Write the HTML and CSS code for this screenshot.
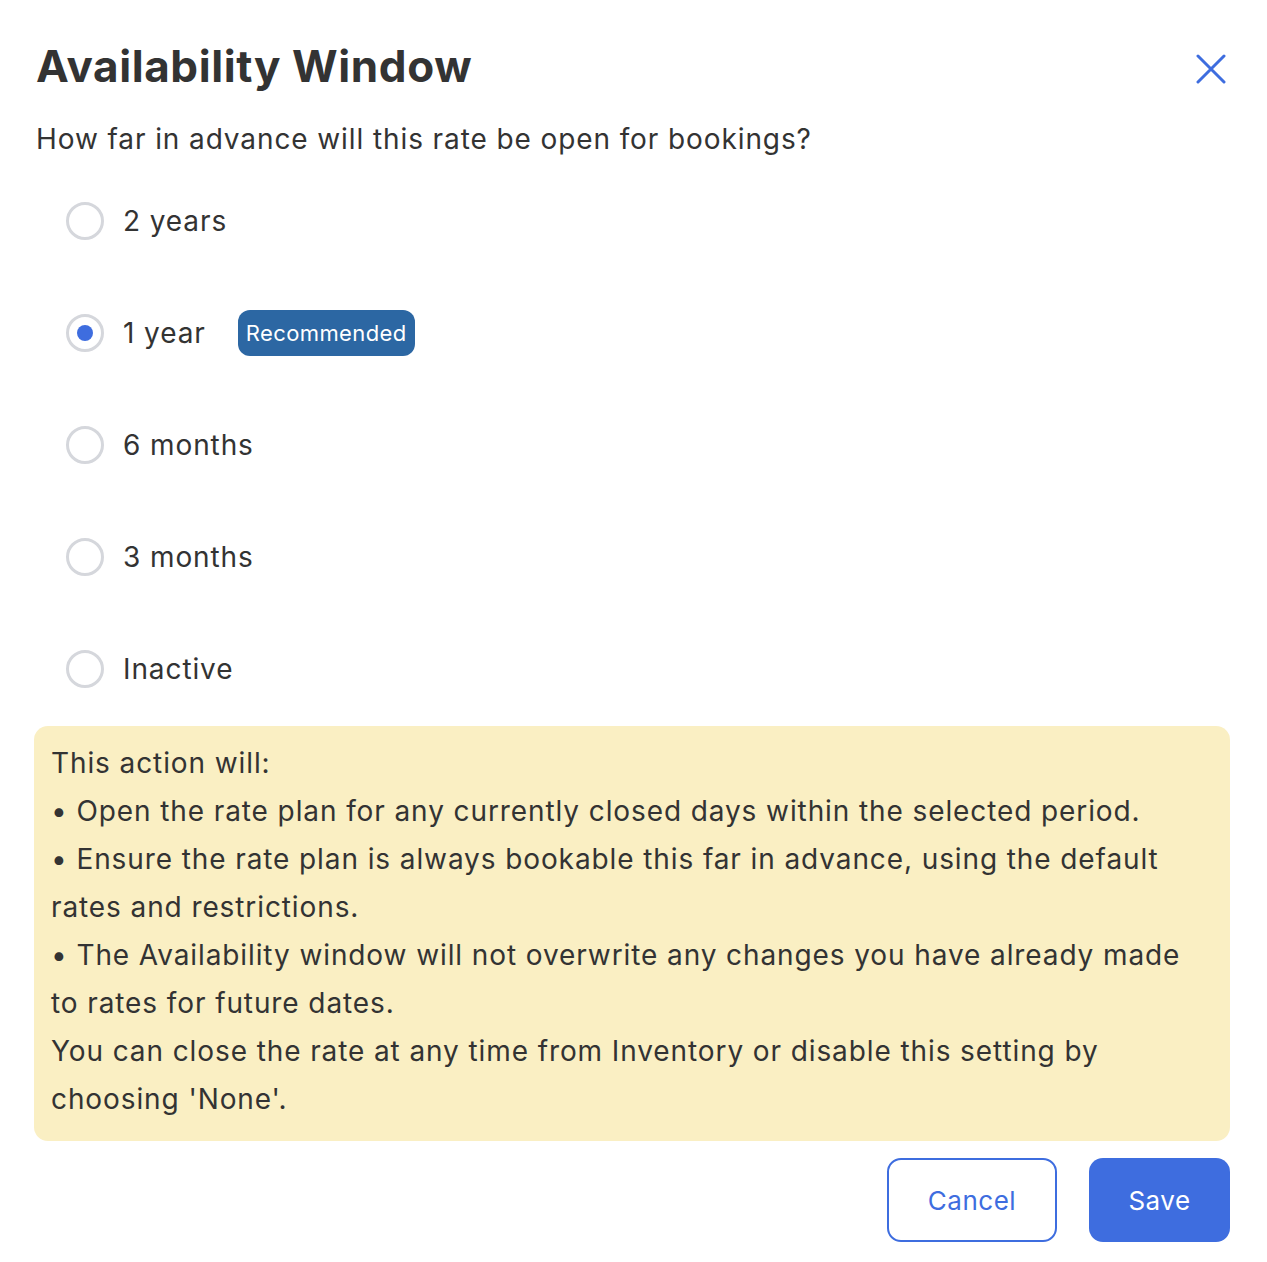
FILE: index.html
```html
<!DOCTYPE html>
<html lang="en">
<head>
    <meta charset="UTF-8">
    <meta name="viewport" content="width=device-width, initial-scale=1.0">
    <title>Availability Window</title>
    <link rel="stylesheet" href="styles.css">
</head>
<body>
    <div class="dialog">
        <div class="dialog-header">
            <h1 class="title">Availability Window</h1>
            <button class="close" aria-label="Close">
                <svg width="30" height="30" viewBox="0 0 30 30"><path d="M2 2 L28 28 M28 2 L2 28" stroke="#3e6ddf" stroke-width="3" stroke-linecap="round" fill="none"/></svg>
            </button>
        </div>
        <p class="question">How far in advance will this rate be open for bookings?</p>
        <div class="options">
            <label class="option"><input type="radio" name="window"><span class="radio"></span><span>2 years</span></label>
            <label class="option"><input type="radio" name="window" checked><span class="radio"></span><span>1 year</span><span class="badge">Recommended</span></label>
            <label class="option"><input type="radio" name="window"><span class="radio"></span><span>6 months</span></label>
            <label class="option"><input type="radio" name="window"><span class="radio"></span><span>3 months</span></label>
            <label class="option"><input type="radio" name="window"><span class="radio"></span><span>Inactive</span></label>
        </div>
        <div class="notice">
            <div>This action will:</div>
            <div>• Open the rate plan for any currently closed days within the selected period.</div>
            <div>• Ensure the rate plan is always bookable this far in advance, using the default rates and restrictions.</div>
            <div>• The Availability window will not overwrite any changes you have already made to rates for future dates.</div>
            <div>You can close the rate at any time from Inventory or disable this setting by choosing 'None'.</div>
        </div>
        <div class="actions">
            <button class="btn btn-cancel">Cancel</button>
            <button class="btn btn-save">Save</button>
        </div>
    </div>
</body>
</html>
```

FILE: styles.css
```css
body {
    font-family: Inter, sans-serif;
    color: #333333;
    margin: 0;
    background: #ffffff;
}
.dialog {
    padding: 36px 37px 20px 34px;
}
.dialog-header {
    display: flex;
    justify-content: space-between;
    align-items: center;
    padding-left: 2px;
}
.title {
    margin: 0;
    font-size: 44px;
    font-weight: 700;
    line-height: 60px;
    letter-spacing: 0.6px;
}
.close {
    border: none;
    background: none;
    padding: 0;
    margin: 8px 4px 0 0;
    cursor: pointer;
}
.question {
    margin: 23px 0 0 2px;
    font-size: 28px;
    line-height: 40px;
    letter-spacing: 0.9px;
}
.options {
    display: flex;
    flex-direction: column;
    gap: 74px;
    margin: 43px 0 0 32px;
}
.option {
    display: flex;
    align-items: center;
    height: 38px;
    font-size: 28px;
    letter-spacing: 0.9px;
    cursor: pointer;
}
.option input {
    display: none;
}
.radio {
    width: 32px;
    height: 32px;
    border: 3px solid #d5d7dc;
    border-radius: 50%;
    margin-right: 19px;
    display: flex;
    align-items: center;
    justify-content: center;
}
.option input:checked + .radio::after {
    content: "";
    width: 16px;
    height: 16px;
    border-radius: 50%;
    background: #3e6ddf;
}
.badge {
    margin-left: 32px;
    background: #2c67a3;
    color: #ffffff;
    font-size: 22px;
    line-height: 46px;
    padding: 0 8px;
    border-radius: 12px;
    letter-spacing: 0.4px;
}
.notice {
    margin-top: 38px;
    background: #faefc3;
    border-radius: 14px;
    padding: 13px 18px 18px 17px;
    font-size: 28px;
    line-height: 48px;
    letter-spacing: 0.9px;
}
.actions {
    display: flex;
    justify-content: flex-end;
    gap: 32px;
    margin-top: 17px;
}
.btn {
    font-family: Inter, sans-serif;
    font-size: 26px;
    height: 84px;
    border-radius: 14px;
    letter-spacing: 0.5px;
    cursor: pointer;
}
.btn-cancel {
    width: 170px;
    background: #ffffff;
    color: #3e6ddf;
    border: 2px solid #3e6ddf;
}
.btn-save {
    width: 141px;
    background: #3e6ddf;
    color: #ffffff;
    border: none;
}
```
